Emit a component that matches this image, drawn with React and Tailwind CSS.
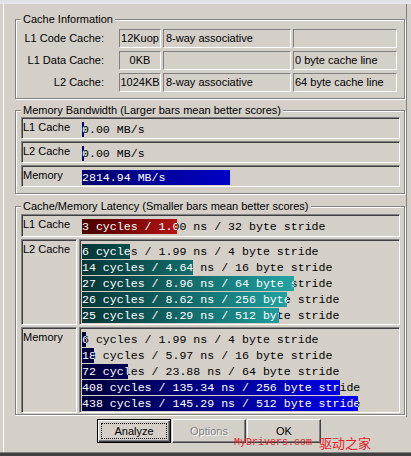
import React from "react";

const SUNKEN =
  "border border-t-[#808080] border-l-[#808080] border-b-white border-r-white shadow-[inset_1px_1px_0_#404040]";
const FIELD =
  "h-[19px] border border-t-[#808080] border-l-[#808080] border-b-white border-r-white leading-[17px] whitespace-nowrap overflow-hidden";
const GROUP =
  "relative w-[390px] border border-[#808080] shadow-[inset_1px_1px_0_#fff,1px_1px_0_#fff]";

const BW = "bg-linear-to-r from-[#00006c] to-[#0000c8]";
const RED = "bg-linear-to-r from-[#480000] to-[#b41414]";
const TEAL = "bg-linear-to-r from-[#063636] to-[#22a4a4]";
const BLUE = "bg-linear-to-r from-[#00003c] to-[#0000f4]";

function Legend({ children }) {
  return (
    <span className="absolute left-[5px] top-[-8px] px-[2px] bg-[#d4d0c8] leading-[14px] whitespace-nowrap">
      {children}
    </span>
  );
}

function Bar({ w, gw, grad, text }) {
  return (
    <div className="relative h-[15px] w-full font-['Liberation_Mono',monospace] text-[11.6px] leading-[15px] whitespace-pre">
      <span className="text-black">{text}</span>
      <div className="absolute left-0 top-0 h-[15px] overflow-hidden" style={{ width: w }}>
        <div className={`h-[15px] text-white ${grad}`} style={{ width: gw }}>
          {text}
        </div>
      </div>
    </div>
  );
}

const cacheRows = [
  { label: "L1 Code Cache:", a: "12Kuop", b: "8-way associative", c: "" },
  { label: "L1 Data Cache:", a: "0KB", b: "", c: "0 byte cache line" },
  { label: "L2 Cache:", a: "1024KB", b: "8-way associative", c: "64 byte cache line" },
];

const bwRows = [
  { label: "L1 Cache", w: 2, text: "0.00 MB/s" },
  { label: "L2 Cache", w: 2, text: "0.00 MB/s" },
  { label: "Memory", w: 148, text: "2814.94 MB/s" },
];

const l2Rows = [
  { w: 48, text: "6 cycles / 1.99 ns / 4 byte stride" },
  { w: 111, text: "14 cycles / 4.64 ns / 16 byte stride" },
  { w: 212, text: "27 cycles / 8.96 ns / 64 byte stride" },
  { w: 205, text: "26 cycles / 8.62 ns / 256 byte stride" },
  { w: 197, text: "25 cycles / 8.29 ns / 512 byte stride" },
];

const memRows = [
  { w: 4, text: "6 cycles / 1.99 ns / 4 byte stride" },
  { w: 12, text: "18 cycles / 5.97 ns / 16 byte stride" },
  { w: 46, text: "72 cycles / 23.88 ns / 64 byte stride" },
  { w: 258, text: "408 cycles / 135.34 ns / 256 byte stride" },
  { w: 276, text: "438 cycles / 145.29 ns / 512 byte stride" },
];

function LatencyBlock({ label, rows, grad, gw }) {
  return (
    <div className="flex h-[86px] gap-[2px]">
      <div className={`${SUNKEN} w-[56px] pl-[1px] pt-[2px] leading-[14px]`}>{label}</div>
      <div className={`${SUNKEN} w-[321px] pl-[2px] pt-[4px] flex flex-col gap-[1px]`}>
        {rows.map((r, i) => (
          <Bar key={i} w={r.w} gw={gw} grad={grad} text={r.text} />
        ))}
      </div>
    </div>
  );
}

export default function App() {
  return (
    <div className="relative flex flex-col w-[411px] h-[456px] overflow-hidden bg-[#d4d0c8] font-['Liberation_Sans',Arial,sans-serif] text-[11px] text-black">
      <div className="h-[4px] bg-linear-to-b from-[#dde1e8] to-[#e6e8ec]" />
      <div className="flex flex-col ml-[3px] h-[448px] border-l border-white">
        <div className="w-[403px] h-[413px] border-r border-[#808080] pl-[11px] pt-[15px]">
          {/* Cache Information */}
          <div className={`${GROUP} h-[80px] pt-[9px]`}>
            <Legend>Cache Information</Legend>
            <div className="flex flex-col gap-[3px]">
              {cacheRows.map((r, i) => (
                <div key={i} className="flex items-center">
                  <div className="w-[88px] text-right leading-[19px] whitespace-nowrap">{r.label}</div>
                  <div className={`${FIELD} ml-[15px] w-[42px] text-center`}>{r.a}</div>
                  <div className={`${FIELD} ml-[2px] w-[128px] pl-[2px]`}>{r.b}</div>
                  <div className={`${FIELD} ml-[2px] w-[104px] pl-[1px]`}>{r.c}</div>
                </div>
              ))}
            </div>
          </div>

          {/* Memory Bandwidth */}
          <div className={`${GROUP} mt-[11px] h-[84px] pt-[6px] pl-[5px] flex flex-col gap-[2px]`}>
            <Legend>Memory Bandwidth (Larger bars mean better scores)</Legend>
            {bwRows.map((r, i) => (
              <div key={i} className={`${SUNKEN} flex items-start w-[379px] h-[22px]`}>
                <div className="w-[60px] shrink-0 pl-[1px] pt-[2px] leading-[14px]">{r.label}</div>
                <div className="flex-1 mt-[4px]">
                  <Bar w={r.w} gw={148} grad={BW} text={r.text} />
                </div>
              </div>
            ))}
          </div>

          {/* Latency */}
          <div className={`${GROUP} mt-[12px] h-[209px] pt-[7px] pl-[5px] flex flex-col gap-[2px]`}>
            <Legend>Cache/Memory Latency (Smaller bars mean better scores)</Legend>
            <div className={`${SUNKEN} flex items-start w-[379px] h-[23px]`}>
              <div className="w-[60px] shrink-0 pl-[1px] pt-[2px] leading-[14px]">L1 Cache</div>
              <div className="flex-1 mt-[4px]">
                <Bar w={95} gw={95} grad={RED} text="3 cycles / 1.00 ns / 32 byte stride" />
              </div>
            </div>
            <LatencyBlock label="L2 Cache" rows={l2Rows} grad={TEAL} gw={212} />
            <LatencyBlock label="Memory" rows={memRows} grad={BLUE} gw={276} />
          </div>
        </div>

        {/* Buttons */}
        <div className="mt-[2px] flex gap-[1px] pl-[93px]">
          <button className="w-[74px] h-[24px] border border-black shadow-[inset_1px_1px_0_#fff,inset_-1px_-1px_0_#404040,inset_-2px_-2px_0_#808080] flex items-center justify-center">
            <span className="w-[66px] h-[16px] border border-dotted border-black leading-[14px] text-center">Analyze</span>
          </button>
          <button className="w-[74px] h-[24px] border border-t-white border-l-white border-b-[#404040] border-r-[#404040] shadow-[inset_-1px_-1px_0_#808080] text-[#808080] [text-shadow:1px_1px_0_#fff]">
            Options
          </button>
          <button className="w-[74px] h-[24px] border border-t-white border-l-white border-b-[#404040] border-r-[#404040] shadow-[inset_-1px_-1px_0_#808080]">
            OK
          </button>
        </div>
      </div>
      <div className="h-[1px] bg-[#808080]" />
      <div className="h-[3px] bg-[#404040]" />

      {/* Watermark */}
      <div className="absolute left-[234px] top-[435px] flex items-center gap-[7px] text-[#e81c2c]">
        <span className="font-['Liberation_Mono',monospace] text-[10px] leading-[14px]">MyDrivers.com</span>
        <span className="font-['Noto_Sans_CJK_SC',sans-serif] text-[13px] leading-[15px]">驱动之家</span>
      </div>
    </div>
  );
}
